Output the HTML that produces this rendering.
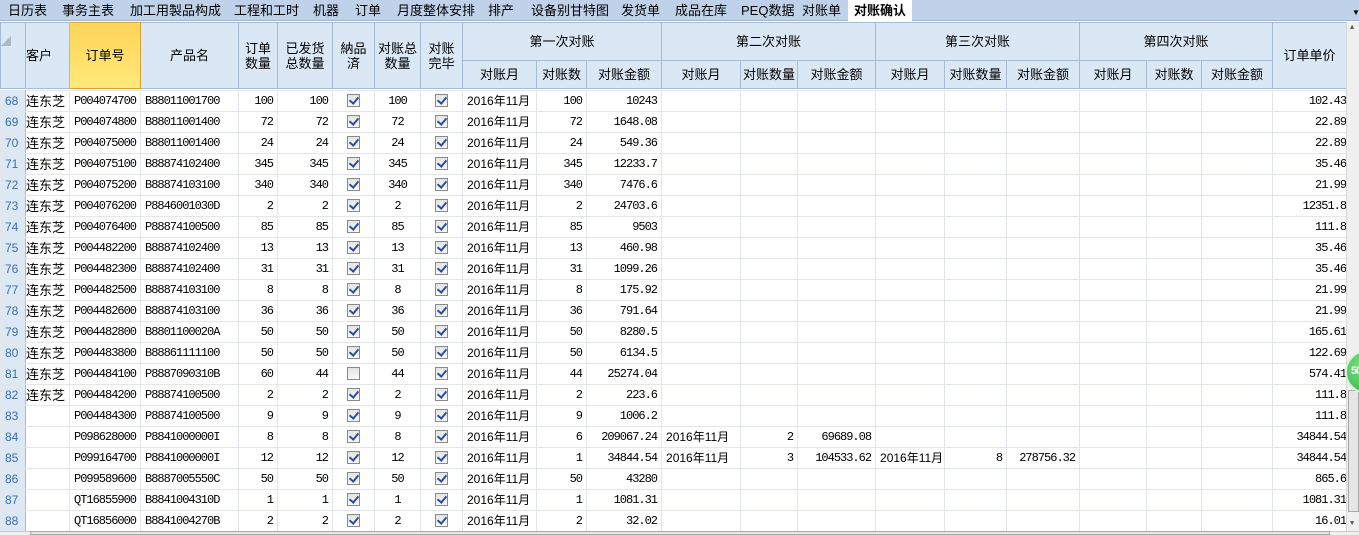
<!DOCTYPE html>
<html><head><meta charset="utf-8"><style>
*{box-sizing:border-box;margin:0;padding:0}
body{width:1359px;height:535px;overflow:hidden;background:#fff;font-family:"Liberation Mono","Noto Sans CJK SC",monospace;font-size:12px;letter-spacing:-1px;color:#000;position:relative}
#tabs{position:absolute;left:0;top:0;width:1359px;height:21px;background:#bfd2e9;border-bottom:1px solid #9fb5d2;font-family:"Liberation Sans","Noto Sans CJK SC",sans-serif;font-size:13px;line-height:17px;letter-spacing:0}
#tabs span{position:absolute;top:2px;white-space:nowrap}
#tabs .act{top:0;height:21px;background:#fff;padding:2px 6px 0;font-weight:bold}
table{position:absolute;left:0;top:22px;border-collapse:collapse;table-layout:fixed;width:1346px}
th{background:#dae7f5;border:1px solid #a8bbd5;font-weight:normal;font-family:"Liberation Sans","Noto Sans CJK SC",sans-serif;font-size:13px;line-height:15px;overflow:hidden;white-space:nowrap;letter-spacing:0}
td{border:1px solid #e3e6ea;height:21px;padding:0 4px;white-space:nowrap;overflow:hidden;text-align:right;line-height:19px}
td span.z{display:inline-block;height:19px;font-family:"Liberation Sans","Noto Sans CJK SC",sans-serif;font-size:12px;line-height:19px;vertical-align:top;letter-spacing:0;overflow:hidden}
td.l{text-align:left}
td.c{text-align:center}
td.n{background:#dde8f5;border-right:1px solid #a8bbd5;color:#3a6ea6;text-align:left;padding-left:4px;font-family:"Liberation Sans",sans-serif;font-size:12px;letter-spacing:0}
td.k{padding-left:0;text-align:left;font-family:"Liberation Sans","Noto Sans CJK SC",sans-serif;font-size:13px;line-height:15px;letter-spacing:0}
td.p{padding-right:0;text-overflow:clip}
.cb{display:inline-block;width:13px;height:13px;border:1px solid #8a8a8a;background:linear-gradient(#e4e4e4,#f8f8f8);vertical-align:middle;position:relative}
.cb.on::after{content:"";position:absolute;left:3px;top:0px;width:4px;height:7px;border:solid #2b4fa0;border-width:0 2px 2px 0;transform:rotate(40deg)}
.gap td{height:2px;border:none;background:#fff;line-height:0}
</style></head><body>
<div id="tabs">
<span style="left:8px">日历表</span><span style="left:62px">事务主表</span><span style="left:130px">加工用製品构成</span><span style="left:234px">工程和工时</span><span style="left:313px">机器</span><span style="left:355px">订单</span><span style="left:397px">月度整体安排</span><span style="left:488px">排产</span><span style="left:531px">设备别甘特图</span><span style="left:621px">发货单</span><span style="left:675px">成品在库</span><span style="left:741px">PEQ数据</span><span style="left:802px">对账单</span><span class="act" style="left:848px">对账确认</span>
<span style="left:1352px;top:4px;font-size:8px">▼</span>
</div>
<table>
<colgroup><col style="width:25px"><col style="width:44px"><col style="width:71px"><col style="width:98px"><col style="width:39px"><col style="width:55px"><col style="width:42px"><col style="width:46px"><col style="width:42px"><col style="width:74px"><col style="width:50px"><col style="width:75px"><col style="width:79px"><col style="width:57px"><col style="width:78px"><col style="width:69px"><col style="width:62px"><col style="width:73px"><col style="width:67px"><col style="width:55px"><col style="width:71px"><col style="width:74px"></colgroup>
<tr style="height:38px"><th rowspan="2" style="color:#aab8c8;text-align:left;vertical-align:top;padding-top:12px;font-size:10px">◢</th><th rowspan="2" style="text-align:left">客户</th><th rowspan="2" style="background:linear-gradient(#ffd45a,#ffe97a);border-color:#e0a030">订单号</th><th rowspan="2">产品名</th><th rowspan="2">订单<br>数量</th><th rowspan="2">已发货<br>总数量</th><th rowspan="2">納品<br>済</th><th rowspan="2">对账总<br>数量</th><th rowspan="2">对账<br>完毕</th><th colspan="3">第一次对账</th><th colspan="3">第二次对账</th><th colspan="3">第三次对账</th><th colspan="3">第四次对账</th><th rowspan="2">订单单价</th></tr>
<tr style="height:28px"><th>对账月</th><th>对账数</th><th>对账金额</th><th>对账月</th><th>对账数量</th><th>对账金额</th><th>对账月</th><th>对账数量</th><th>对账金额</th><th>对账月</th><th>对账数</th><th>对账金额</th></tr>
<tr class="gap"><td colspan="22"></td></tr>
<tr><td class="n">68</td><td class="k">连东芝</td><td class="l">P004074700</td><td class="l">B88011001700</td><td>100</td><td>100</td><td class="c"><span class="cb on"></span></td><td class="c">100</td><td class="c"><span class="cb on"></span></td><td class="l"><span class="z">2016年11月</span></td><td>100</td><td>10243</td><td></td><td></td><td></td><td></td><td></td><td></td><td></td><td></td><td></td><td class="p">102.43</td></tr>
<tr><td class="n">69</td><td class="k">连东芝</td><td class="l">P004074800</td><td class="l">B88011001400</td><td>72</td><td>72</td><td class="c"><span class="cb on"></span></td><td class="c">72</td><td class="c"><span class="cb on"></span></td><td class="l"><span class="z">2016年11月</span></td><td>72</td><td>1648.08</td><td></td><td></td><td></td><td></td><td></td><td></td><td></td><td></td><td></td><td class="p">22.89</td></tr>
<tr><td class="n">70</td><td class="k">连东芝</td><td class="l">P004075000</td><td class="l">B88011001400</td><td>24</td><td>24</td><td class="c"><span class="cb on"></span></td><td class="c">24</td><td class="c"><span class="cb on"></span></td><td class="l"><span class="z">2016年11月</span></td><td>24</td><td>549.36</td><td></td><td></td><td></td><td></td><td></td><td></td><td></td><td></td><td></td><td class="p">22.89</td></tr>
<tr><td class="n">71</td><td class="k">连东芝</td><td class="l">P004075100</td><td class="l">B88874102400</td><td>345</td><td>345</td><td class="c"><span class="cb on"></span></td><td class="c">345</td><td class="c"><span class="cb on"></span></td><td class="l"><span class="z">2016年11月</span></td><td>345</td><td>12233.7</td><td></td><td></td><td></td><td></td><td></td><td></td><td></td><td></td><td></td><td class="p">35.46</td></tr>
<tr><td class="n">72</td><td class="k">连东芝</td><td class="l">P004075200</td><td class="l">B88874103100</td><td>340</td><td>340</td><td class="c"><span class="cb on"></span></td><td class="c">340</td><td class="c"><span class="cb on"></span></td><td class="l"><span class="z">2016年11月</span></td><td>340</td><td>7476.6</td><td></td><td></td><td></td><td></td><td></td><td></td><td></td><td></td><td></td><td class="p">21.99</td></tr>
<tr><td class="n">73</td><td class="k">连东芝</td><td class="l">P004076200</td><td class="l">P8846001030D</td><td>2</td><td>2</td><td class="c"><span class="cb on"></span></td><td class="c">2</td><td class="c"><span class="cb on"></span></td><td class="l"><span class="z">2016年11月</span></td><td>2</td><td>24703.6</td><td></td><td></td><td></td><td></td><td></td><td></td><td></td><td></td><td></td><td class="p">12351.8</td></tr>
<tr><td class="n">74</td><td class="k">连东芝</td><td class="l">P004076400</td><td class="l">P88874100500</td><td>85</td><td>85</td><td class="c"><span class="cb on"></span></td><td class="c">85</td><td class="c"><span class="cb on"></span></td><td class="l"><span class="z">2016年11月</span></td><td>85</td><td>9503</td><td></td><td></td><td></td><td></td><td></td><td></td><td></td><td></td><td></td><td class="p">111.8</td></tr>
<tr><td class="n">75</td><td class="k">连东芝</td><td class="l">P004482200</td><td class="l">B88874102400</td><td>13</td><td>13</td><td class="c"><span class="cb on"></span></td><td class="c">13</td><td class="c"><span class="cb on"></span></td><td class="l"><span class="z">2016年11月</span></td><td>13</td><td>460.98</td><td></td><td></td><td></td><td></td><td></td><td></td><td></td><td></td><td></td><td class="p">35.46</td></tr>
<tr><td class="n">76</td><td class="k">连东芝</td><td class="l">P004482300</td><td class="l">B88874102400</td><td>31</td><td>31</td><td class="c"><span class="cb on"></span></td><td class="c">31</td><td class="c"><span class="cb on"></span></td><td class="l"><span class="z">2016年11月</span></td><td>31</td><td>1099.26</td><td></td><td></td><td></td><td></td><td></td><td></td><td></td><td></td><td></td><td class="p">35.46</td></tr>
<tr><td class="n">77</td><td class="k">连东芝</td><td class="l">P004482500</td><td class="l">B88874103100</td><td>8</td><td>8</td><td class="c"><span class="cb on"></span></td><td class="c">8</td><td class="c"><span class="cb on"></span></td><td class="l"><span class="z">2016年11月</span></td><td>8</td><td>175.92</td><td></td><td></td><td></td><td></td><td></td><td></td><td></td><td></td><td></td><td class="p">21.99</td></tr>
<tr><td class="n">78</td><td class="k">连东芝</td><td class="l">P004482600</td><td class="l">B88874103100</td><td>36</td><td>36</td><td class="c"><span class="cb on"></span></td><td class="c">36</td><td class="c"><span class="cb on"></span></td><td class="l"><span class="z">2016年11月</span></td><td>36</td><td>791.64</td><td></td><td></td><td></td><td></td><td></td><td></td><td></td><td></td><td></td><td class="p">21.99</td></tr>
<tr><td class="n">79</td><td class="k">连东芝</td><td class="l">P004482800</td><td class="l">B8801100020A</td><td>50</td><td>50</td><td class="c"><span class="cb on"></span></td><td class="c">50</td><td class="c"><span class="cb on"></span></td><td class="l"><span class="z">2016年11月</span></td><td>50</td><td>8280.5</td><td></td><td></td><td></td><td></td><td></td><td></td><td></td><td></td><td></td><td class="p">165.61</td></tr>
<tr><td class="n">80</td><td class="k">连东芝</td><td class="l">P004483800</td><td class="l">B88861111100</td><td>50</td><td>50</td><td class="c"><span class="cb on"></span></td><td class="c">50</td><td class="c"><span class="cb on"></span></td><td class="l"><span class="z">2016年11月</span></td><td>50</td><td>6134.5</td><td></td><td></td><td></td><td></td><td></td><td></td><td></td><td></td><td></td><td class="p">122.69</td></tr>
<tr><td class="n">81</td><td class="k">连东芝</td><td class="l">P004484100</td><td class="l">P8887090310B</td><td>60</td><td>44</td><td class="c"><span class="cb"></span></td><td class="c">44</td><td class="c"><span class="cb on"></span></td><td class="l"><span class="z">2016年11月</span></td><td>44</td><td>25274.04</td><td></td><td></td><td></td><td></td><td></td><td></td><td></td><td></td><td></td><td class="p">574.41</td></tr>
<tr><td class="n">82</td><td class="k">连东芝</td><td class="l">P004484200</td><td class="l">P88874100500</td><td>2</td><td>2</td><td class="c"><span class="cb on"></span></td><td class="c">2</td><td class="c"><span class="cb on"></span></td><td class="l"><span class="z">2016年11月</span></td><td>2</td><td>223.6</td><td></td><td></td><td></td><td></td><td></td><td></td><td></td><td></td><td></td><td class="p">111.8</td></tr>
<tr><td class="n">83</td><td class="k"></td><td class="l">P004484300</td><td class="l">P88874100500</td><td>9</td><td>9</td><td class="c"><span class="cb on"></span></td><td class="c">9</td><td class="c"><span class="cb on"></span></td><td class="l"><span class="z">2016年11月</span></td><td>9</td><td>1006.2</td><td></td><td></td><td></td><td></td><td></td><td></td><td></td><td></td><td></td><td class="p">111.8</td></tr>
<tr><td class="n">84</td><td class="k"></td><td class="l">P098628000</td><td class="l">P8841000000I</td><td>8</td><td>8</td><td class="c"><span class="cb on"></span></td><td class="c">8</td><td class="c"><span class="cb on"></span></td><td class="l"><span class="z">2016年11月</span></td><td>6</td><td>209067.24</td><td class="l"><span class="z">2016年11月</span></td><td>2</td><td>69689.08</td><td></td><td></td><td></td><td></td><td></td><td></td><td class="p">34844.54</td></tr>
<tr><td class="n">85</td><td class="k"></td><td class="l">P099164700</td><td class="l">P8841000000I</td><td>12</td><td>12</td><td class="c"><span class="cb on"></span></td><td class="c">12</td><td class="c"><span class="cb on"></span></td><td class="l"><span class="z">2016年11月</span></td><td>1</td><td>34844.54</td><td class="l"><span class="z">2016年11月</span></td><td>3</td><td>104533.62</td><td class="l"><span class="z">2016年11月</span></td><td>8</td><td>278756.32</td><td></td><td></td><td></td><td class="p">34844.54</td></tr>
<tr><td class="n">86</td><td class="k"></td><td class="l">P099589600</td><td class="l">B8887005550C</td><td>50</td><td>50</td><td class="c"><span class="cb on"></span></td><td class="c">50</td><td class="c"><span class="cb on"></span></td><td class="l"><span class="z">2016年11月</span></td><td>50</td><td>43280</td><td></td><td></td><td></td><td></td><td></td><td></td><td></td><td></td><td></td><td class="p">865.6</td></tr>
<tr><td class="n">87</td><td class="k"></td><td class="l">QT16855900</td><td class="l">B8841004310D</td><td>1</td><td>1</td><td class="c"><span class="cb on"></span></td><td class="c">1</td><td class="c"><span class="cb on"></span></td><td class="l"><span class="z">2016年11月</span></td><td>1</td><td>1081.31</td><td></td><td></td><td></td><td></td><td></td><td></td><td></td><td></td><td></td><td class="p">1081.31</td></tr>
<tr><td class="n">88</td><td class="k"></td><td class="l">QT16856000</td><td class="l">B8841004270B</td><td>2</td><td>2</td><td class="c"><span class="cb on"></span></td><td class="c">2</td><td class="c"><span class="cb on"></span></td><td class="l"><span class="z">2016年11月</span></td><td>2</td><td>32.02</td><td></td><td></td><td></td><td></td><td></td><td></td><td></td><td></td><td></td><td class="p">16.01</td></tr>
</table>
<div style="position:absolute;left:1346px;top:22px;width:13px;height:509px;background:#f0f0f0;border-left:1px solid #d8d8d8"></div>
<div style="position:absolute;left:1348px;top:390px;width:11px;height:122px;background:#e6e6e6;border:1px solid #a8a8a8"></div>
<div style="position:absolute;left:1350px;top:24px;font-size:7px;color:#555">▲</div>
<div style="position:absolute;left:1350px;top:520px;font-size:7px;color:#555">▼</div>
<div style="position:absolute;left:1345px;top:350px;width:44px;height:44px;border-radius:50%;background:radial-gradient(circle at 40% 35%,#7ee07e,#2bb24a);border:2px solid #d8f0d8;color:#fff;font-weight:bold;font-size:11px;padding:13px 0 0 4px;font-family:'Liberation Sans',sans-serif">50</div>
<div style="position:absolute;left:0;top:531px;width:1359px;height:4px;background:#f0f0f0;border-top:1px solid #c8c8c8"></div>
<div style="position:absolute;left:30px;top:531px;width:1300px;height:4px;border:1px solid #a8a8a8;background:#e8e8e8"></div>
</body></html>
